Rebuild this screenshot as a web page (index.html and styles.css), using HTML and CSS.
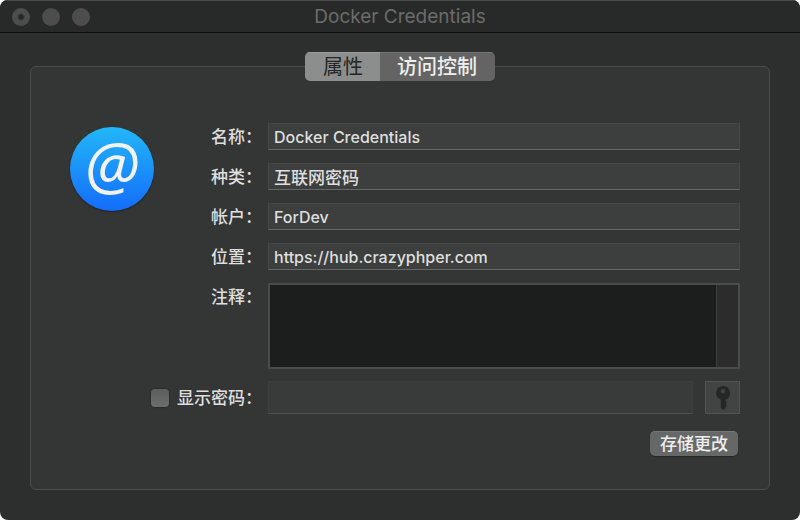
FILE: index.html
```html
<!DOCTYPE html>
<html lang="zh-CN">
  <head>
    <meta charset="UTF-8" />
    <meta name="viewport" content="width=device-width, initial-scale=1.0" />
    <title>Docker Credentials</title>
    <link rel="stylesheet" href="styles.css">
  </head>
  <body>
    <div class="window">
      <header class="titlebar">
        <div class="lights">
          <button class="light edited" type="button" aria-label="关闭"></button>
          <button class="light" type="button" aria-label="最小化"></button>
          <button class="light" type="button" aria-label="缩放"></button>
        </div>
        <h1>Docker Credentials</h1>
      </header>

      <main class="content">
        <div class="tabs" role="tablist">
          <button class="tab active" type="button" role="tab" aria-selected="true">属性</button>
          <button class="tab" type="button" role="tab" aria-selected="false">访问控制</button>
        </div>

        <form class="panel">
          <svg class="account-icon" viewBox="0 0 84 84" aria-hidden="true">
            <defs>
              <linearGradient id="blue" x1="0" y1="0" x2="0" y2="1">
                <stop offset="0" stop-color="#22b7f8" />
                <stop offset="1" stop-color="#146cfa" />
              </linearGradient>
            </defs>
            <circle cx="42" cy="42" r="42" fill="url(#blue)" />
            <text class="at-sign" x="42" y="62" text-anchor="middle">@</text>
          </svg>

          <label class="label" for="name">名称：</label>
          <input class="field" type="text" id="name" value="Docker Credentials" />

          <label class="label" for="kind">种类：</label>
          <input class="field" type="text" id="kind" value="互联网密码" readonly />

          <label class="label" for="account">帐户：</label>
          <input class="field" type="text" id="account" value="ForDev" />

          <label class="label" for="where">位置：</label>
          <input class="field" type="text" id="where" value="https://hub.crazyphper.com" />

          <label class="label" for="comments">注释：</label>
          <div class="comments">
            <textarea id="comments"></textarea>
            <div class="scroll-track"></div>
          </div>

          <label class="label show-password" for="showPassword">
            <input type="checkbox" id="showPassword" />
            显示密码：
          </label>
          <div class="password-row">
            <input class="field password" type="password" id="password" aria-label="密码" disabled />
            <button class="key-btn" type="button" aria-label="密码助理" disabled>
              <svg viewBox="0 0 14 24" width="14" height="24" aria-hidden="true">
                <path fill-rule="evenodd" d="M7 0a7 7 0 0 1 2.6 13.5V15L11 16.5 9.6 18 11 19.5 9.6 21v1L7.4 24 4.8 22V13.6A7 7 0 0 1 7 0zM7 3a2.2 2.2 0 1 0 0 4.4A2.2 2.2 0 1 0 7 3z" />
              </svg>
            </button>
          </div>

          <button class="save-btn" type="submit">存储更改</button>
        </form>
      </main>
    </div>
  </body>
</html>
```

FILE: styles.css
```css
* {
  margin: 0;
  padding: 0;
  box-sizing: border-box;
}

body {
  font-family: Inter, "Noto Sans CJK SC", sans-serif;
  font-size: 17px;
  color: #dfdfde;
  background-color: #fff;
}

button,
input,
textarea {
  font: inherit;
  color: inherit;
}

.window {
  display: flex;
  flex-direction: column;
  min-height: 100vh;
  background-color: #2d2f2e;
  border-radius: 8px;
  overflow: hidden;
}

/* title bar */
.titlebar {
  display: grid;
  grid-template-columns: 1fr auto 1fr;
  align-items: center;
  height: 33px;
  padding: 0 12px;
  background-color: #282a29;
  border-top: 1px solid #4a4c4b;
  border-bottom: 1px solid #0c0d0d;
}

.titlebar h1 {
  font-size: 19px;
  font-weight: 400;
  line-height: 28px;
  color: #6b6c6b;
}

.lights {
  display: flex;
  gap: 12px;
}

.light {
  width: 18px;
  height: 18px;
  border: none;
  border-radius: 50%;
  background-color: #4c4d4c;
}

.light.edited {
  background-image: radial-gradient(circle, #252726 2px, transparent 4px);
}

/* tabs sit on the top edge of the panel */
.content {
  flex: 1;
  display: flex;
  flex-direction: column;
  padding: 19px 30px 30px;
}

.tabs {
  display: flex;
  align-self: center;
  height: 29px;
  margin-bottom: -15px;
  border-radius: 5px;
  overflow: hidden;
  z-index: 1;
}

.tab {
  padding: 0 18px 0 17px;
  border: none;
  font-size: 20px;
  font-weight: 500;
  line-height: 28px;
  color: #eeeeee;
  background-color: #636463;
  border-top: 1px solid #737473;
}

.tab.active {
  padding: 0 17px 0 18px;
  font-weight: 400;
  color: #242625;
  background-color: #8b8e8c;
  border-top-color: #9a9c9b;
}

.panel {
  flex: 1;
  display: grid;
  grid-template-columns: 84px 102px 1fr;
  align-content: start;
  gap: 12px 6px;
  padding: 56px 29px 32px 39px;
  background-color: #343635;
  border: 1px solid #4a4c4b;
  border-radius: 6px;
}

.account-icon {
  grid-row: 1 / 5;
  width: 84px;
  height: 84px;
  margin-top: 4px;
  border-radius: 50%;
  box-shadow: 0 1px 2px rgba(0, 0, 0, 0.4);
  overflow: visible;
}

.at-sign {
  font-family: "Open Sans", sans-serif;
  font-size: 64px;
  font-style: italic;
  fill: #f2f2f2;
}

.label {
  grid-column: 2;
  font-weight: 500;
  line-height: 28px;
  text-align: right;
  white-space: nowrap;
}

.field {
  grid-column: 3;
  width: 100%;
  height: 27px;
  padding: 0 5px;
  font-size: 16px;
  font-weight: 500;
  background-color: #3d3f3e;
  border: 1px solid #454746;
  border-bottom-color: #666867;
  outline: none;
}

#kind {
  font-size: 17px;
}

.comments {
  display: flex;
  height: 86px;
  border: 2px solid #4a4c4b;
}

.comments textarea {
  flex: 1;
  padding: 4px;
  background-color: #1c1e1d;
  border: none;
  outline: none;
  resize: none;
}

.scroll-track {
  width: 22px;
  background-color: #2d2c2d;
  border-left: 1px solid #3d3d3d;
}

.show-password {
  grid-column: 1 / 3;
  display: flex;
  align-items: center;
  justify-content: flex-end;
  gap: 8px;
}

.show-password input {
  appearance: none;
  width: 18px;
  height: 18px;
  border-radius: 4px;
  background-image: linear-gradient(#5c5e5d, #6c6e6d);
  box-shadow: 0 0 1px 1px rgba(0, 0, 0, 0.2);
}

.show-password input:checked {
  background-image: linear-gradient(#2a8bf8, #146cfa);
}

.password-row {
  display: flex;
  gap: 12px;
}

.password {
  flex: 1;
  height: 33px;
  background-color: #393b3a;
  border-color: #3d3f3e;
  border-bottom-color: #505251;
}

.key-btn {
  display: flex;
  align-items: center;
  justify-content: center;
  width: 35px;
  height: 33px;
  background-color: #424443;
  border: 1px solid #525453;
}

.key-btn svg {
  fill: #252626;
}

.save-btn {
  grid-column: 3;
  justify-self: end;
  height: 25px;
  margin: 5px 2px 0 0;
  padding: 0 10px;
  font-weight: 500;
  line-height: 24px;
  color: #eeeeee;
  background-color: #666867;
  border: none;
  border-top: 1px solid #767877;
  border-radius: 5px;
  box-shadow: 0 1px 1px rgba(0, 0, 0, 0.3);
}
```
